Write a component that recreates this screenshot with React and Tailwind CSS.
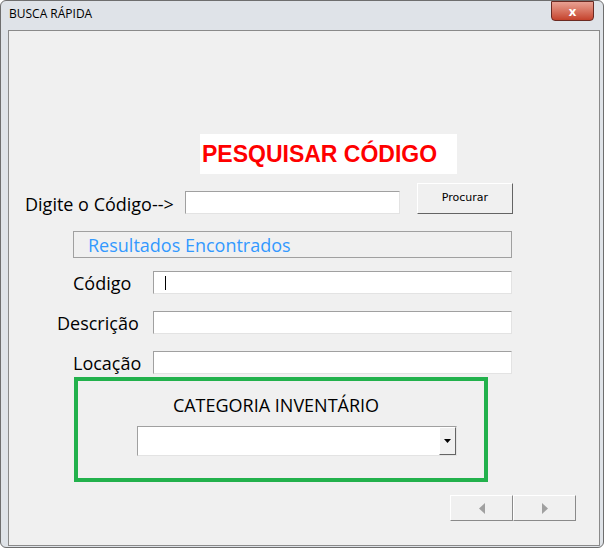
export default function App() {
  const sunken = 'bg-white border border-t-[#a0a0a0] border-l-[#a0a0a0] border-b-[#e3e3e3] border-r-[#e3e3e3]';
  const label = 'text-[18px] text-black leading-none';
  return (
    <div className="w-[607px] h-[554px] bg-white overflow-hidden" style={{ fontFamily: '"Open Sans", "Noto Sans", sans-serif' }}>
      <div className="w-[604px] h-[548px] bg-[#dfe3e8] border border-[#6e6e6e] rounded-[6px] relative">
        {/* title bar */}
        <div className="h-[29px] flex items-start">
          <span className="ml-[8px] mt-[7px] text-[12px] leading-none text-black">BUSCA RÁPIDA</span>
          <div className="ml-auto mr-[9px] w-[43px] h-[20px] rounded-b-[4px] border border-[#6b2a22] bg-gradient-to-b from-[#e8a193] to-[#c4412b] flex items-center justify-center text-white text-[13px] font-bold leading-none">
            x
          </div>
        </div>
        {/* client area */}
        <div className="ml-[7px] w-[592px] h-[516px] bg-[#f0f0f0] border border-[#8a8a8a] flex flex-col">
          <div className="ml-[191px] mt-[103px] w-[257px] h-[40px] bg-white flex items-center">
            <span className="ml-[2px] text-[23px] font-bold text-[#ff0000] leading-none" style={{ fontFamily: '"Liberation Sans", Arial, sans-serif' }}>PESQUISAR CÓDIGO</span>
          </div>
          <div className="mt-[9px] flex items-start">
            <span className={`ml-[16px] mt-[12px] ${label}`}>Digite o Código--&gt;</span>
            <div className={`ml-auto mt-[8px] w-[215px] h-[23px] ${sunken}`} />
            <div className="ml-[17px] mr-[86px] w-[96px] h-[31px] bg-[#f0f0f0] border border-t-[#ffffff] border-l-[#ffffff] border-b-[#646464] border-r-[#646464] flex items-center justify-center text-[11px] text-black" style={{ fontFamily: '"DejaVu Sans", Tahoma, sans-serif' }}>
              Procurar
            </div>
          </div>
          <div className="mt-[17px] ml-[64px] w-[439px] h-[27px] border border-[#a0a0a0] flex items-center">
            <span className="ml-[14px] text-[18px] text-[#3399ff] leading-none">Resultados Encontrados</span>
          </div>
          <div className="mt-[13px] flex items-center h-[23px]">
            <span className={`ml-[64px] ${label}`}>Código</span>
            <div className={`ml-auto mr-[87px] w-[359px] h-[23px] ${sunken} flex items-center`}>
              <div className="ml-[11px] w-px h-[14px] bg-black" />
            </div>
          </div>
          <div className="mt-[17px] flex items-center h-[23px]">
            <span className={`ml-[48px] ${label}`}>Descrição</span>
            <div className={`ml-auto mr-[87px] w-[359px] h-[23px] ${sunken}`} />
          </div>
          <div className="mt-[17px] flex items-center h-[23px]">
            <span className={`ml-[64px] ${label}`}>Locação</span>
            <div className={`ml-auto mr-[87px] w-[359px] h-[23px] ${sunken}`} />
          </div>
          <div className="mt-[3px] ml-[65px] w-[414px] h-[105px] border-4 border-[#22b14c] flex flex-col">
            <span className="mt-[15px] self-center ml-[-10px] text-[18px] text-black leading-none">CATEGORIA INVENTÁRIO</span>
            <div className={`mt-[12px] ml-[59px] w-[320px] h-[30px] ${sunken} flex justify-end`}>
              <div className="w-[17px] h-full bg-[#f0f0f0] border border-t-[#ffffff] border-l-[#ffffff] border-b-[#646464] border-r-[#646464] flex items-center justify-center">
                <svg width="7" height="4" viewBox="0 0 7 4"><path d="M0 0h7L3.5 4z" fill="#000" /></svg>
              </div>
            </div>
          </div>
          <div className="mt-[13px] ml-[441px] flex">
            {[0, 1].map((i) => (
              <div key={i} className="w-[63px] h-[26px] bg-[#f0f0f0] border border-t-[#ffffff] border-l-[#ffffff] border-b-[#8a8a8a] border-r-[#8a8a8a] flex items-center justify-center">
                <svg width="6" height="11" viewBox="0 0 6 11">
                  <path d={i === 0 ? 'M6 0v11L0 5.5z' : 'M0 0v11l6-5.5z'} fill="#a0a0a0" />
                </svg>
              </div>
            ))}
          </div>
        </div>
      </div>
    </div>
  );
}
